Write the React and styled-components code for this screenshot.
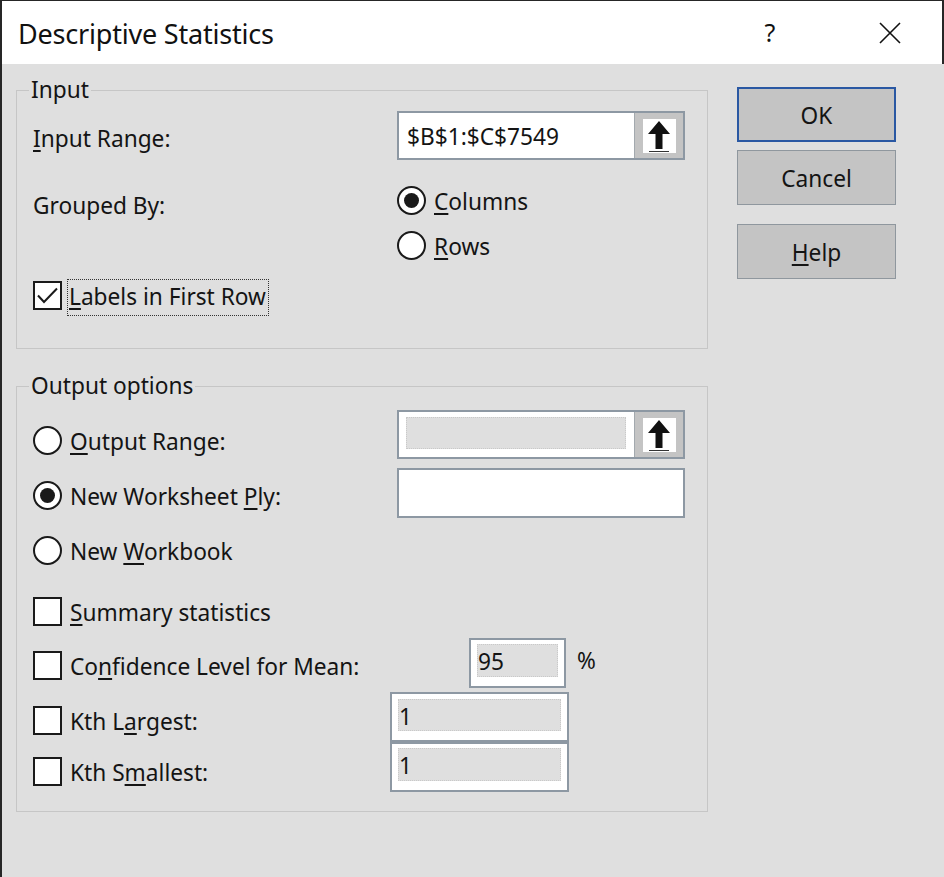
import React from 'react';
import styled, { createGlobalStyle } from 'styled-components';

const GlobalStyle = createGlobalStyle`
  html, body {
    margin: 0;
    padding: 0;
    background: #dfdfdf;
  }
  body {
    font-family: "Noto Sans", "Open Sans", sans-serif;
    color: #141414;
    line-height: 27px;
  }
`;

const TEXT = '22.7px';

const Window = styled.div`
  width: 944px;
  height: 877px;
  box-sizing: border-box;
  border-left: 2px solid #262626;
  border-top: 1px solid #262626;
  background: #dfdfdf;
  display: flex;
  flex-direction: column;
  overflow: hidden;
`;

const TitleBar = styled.div`
  height: 63px;
  flex-shrink: 0;
  background: #fff;
  border-right: 2px solid #262626;
  display: flex;
  align-items: center;
  padding-left: 16px;
`;

const Title = styled.div`
  flex: 1;
  font-size: 27px;
  letter-spacing: -0.2px;
  color: #111;
  margin-top: 2px;
`;

const CaptionButton = styled.div`
  width: ${p => p.$w}px;
  height: 63px;
  display: flex;
  align-items: center;
  justify-content: center;
  margin-right: ${p => p.$mr || 0}px;
  font-size: 25px;
  color: #111;
`;

const Body = styled.div`
  flex: 1;
  display: flex;
  padding: 14px 0 0 14px;
`;

const MainColumn = styled.div`
  width: 692px;
  display: flex;
  flex-direction: column;
`;

const Group = styled.fieldset`
  margin: ${p => p.$mt || 0}px 0 0 0;
  padding: 0 0 ${p => p.$pb}px 16px;
  border: 1px solid #c6c6c6;
  min-width: 0;
`;

const Legend = styled.legend`
  margin-left: -4px;
  padding: 0 2px;
  font-size: ${TEXT};
  line-height: 24px;
  height: 24px;
`;

const Row = styled.div`
  display: grid;
  grid-template-columns: ${p => p.$label || 364}px auto;
  grid-template-rows: ${p => p.$h}px;
  align-items: center;
  justify-items: start;
  height: ${p => p.$h}px;
  margin-top: ${p => p.$mt || 0}px;
  & > :first-child {
    margin-top: ${p => p.$drop || 0}px;
  }
`;

const Label = styled.span`
  font-size: ${TEXT};
  white-space: nowrap;
`;

const Key = styled.span`
  text-decoration: underline;
  text-underline-offset: 3px;
  text-decoration-thickness: 1.5px;
`;

const Choice = styled.label`
  display: flex;
  align-items: center;
  gap: 8px;
  font-size: ${TEXT};
  white-space: nowrap;
`;

const ChoiceText = styled.span`
  margin-top: 2px;
`;

const RadioCircle = styled.span`
  width: 29px;
  height: 29px;
  box-sizing: border-box;
  border: 2px solid #1a1a1a;
  border-radius: 50%;
  background: #fff;
  display: flex;
  align-items: center;
  justify-content: center;
  flex-shrink: 0;
  &::after {
    content: "";
    width: 15px;
    height: 15px;
    border-radius: 50%;
    background: #1a1a1a;
    display: ${p => (p.$checked ? 'block' : 'none')};
  }
`;

const CheckSquare = styled.span`
  width: 29px;
  height: 29px;
  box-sizing: border-box;
  border: 2px solid #1a1a1a;
  background: #fff;
  flex-shrink: 0;
  display: flex;
  svg { display: block; }
`;

const Focus = styled.span`
  border: 1px dotted #333;
  padding: 1px 2px 3px 1px;
  margin-left: -3px;
`;

const Box = styled.div`
  width: ${p => p.$w}px;
  height: ${p => p.$h || 49}px;
  box-sizing: border-box;
  border: 2px solid #8d98a3;
  background: #fff;
  display: flex;
  align-items: stretch;
`;

const BoxText = styled.div`
  flex: 1;
  display: flex;
  align-items: center;
  padding: 1px 0 0 8px;
  font-size: ${TEXT};
`;

const InnerField = styled.div`
  flex: 1;
  margin: ${p => p.$m || '4px 8px 8px 6px'};
  background: #dfdfdf;
  border: 1px dotted #c9c9c9;
  display: flex;
  align-items: center;
  font-size: ${TEXT};
  padding-top: 2px;
`;

const RefButton = styled.div`
  width: 48px;
  background: #c4c4c4;
  border-left: 1px solid #a3a9ae;
  display: flex;
  align-items: center;
  justify-content: center;
  span {
    width: 33px;
    height: 34px;
    background: #fff;
    display: flex;
    align-items: center;
    justify-content: center;
  }
`;

const Percent = styled.span`
  font-size: ${TEXT};
  margin-left: 11px;
  margin-top: -6px;
`;

const ConfidenceCell = styled.div`
  display: flex;
  align-items: center;
`;

const SideColumn = styled.div`
  display: flex;
  flex-direction: column;
  padding: 9px 0 0 29px;
`;

const Button = styled.div`
  width: 159px;
  height: 55px;
  box-sizing: border-box;
  background: #c4c4c4;
  border: ${p => (p.$primary ? '2px solid #2a58a3' : '1px solid #8f979e')};
  display: flex;
  align-items: center;
  justify-content: center;
  font-size: ${TEXT};
  padding-top: 2px;
  margin-top: ${p => p.$mt || 0}px;
`;

const ArrowIcon = () => (
  <svg width="26" height="32" viewBox="0 0 26 32">
    <polygon points="13,1 24,14 16.5,14 16.5,29 9.5,29 9.5,14 2,14" fill="#111" />
    <rect x="3" y="31" width="20" height="1.6" fill="#333" />
  </svg>
);

const Radio = ({ checked, children }) => (
  <Choice>
    <RadioCircle $checked={checked} />
    <ChoiceText>{children}</ChoiceText>
  </Choice>
);

const Check = ({ checked, children }) => (
  <Choice>
    <CheckSquare>
      {checked && (
        <svg width="25" height="25" viewBox="0 0 25 25">
          <polyline points="3,12.5 9,19 22,5.5" fill="none" stroke="#1a1a1a" strokeWidth="2" />
        </svg>
      )}
    </CheckSquare>
    <ChoiceText>{children}</ChoiceText>
  </Choice>
);

const RefField = ({ value, disabled }) => (
  <Box $w={288}>
    {disabled ? <InnerField $m="5px 8px 8px 7px" /> : <BoxText>{value}</BoxText>}
    <RefButton>
      <span><ArrowIcon /></span>
    </RefButton>
  </Box>
);

export default function App() {
  return (
    <>
      <GlobalStyle />
      <Window>
        <TitleBar>
          <Title>Descriptive Statistics</Title>
          <CaptionButton $w={60} $mr={45}>?</CaptionButton>
          <CaptionButton $w={90} $mr={7}>
            <svg width="22" height="22" viewBox="0 0 22 22">
              <path d="M1 1 L21 21 M21 1 L1 21" stroke="#111" strokeWidth="1.6" />
            </svg>
          </CaptionButton>
        </TitleBar>

        <Body>
          <MainColumn>
            <Group $pb={35}>
              <Legend>Input</Legend>
              <Row $h={49} $mt={9} $drop={6}>
                <Label><Key>I</Key>nput Range:</Label>
                <RefField value="$B$1:$C$7549" />
              </Row>
              <Row $h={29} $mt={26} $drop={10}>
                <Label>Grouped By:</Label>
                <Radio checked><Key>C</Key>olumns</Radio>
              </Row>
              <Row $h={29} $mt={16}>
                <span />
                <Radio><Key>R</Key>ows</Radio>
              </Row>
              <Row $h={36} $mt={17}>
                <Check checked>
                  <Focus><Key>L</Key>abels in First Row</Focus>
                </Check>
              </Row>
            </Group>

            <Group $mt={25} $pb={19}>
              <Legend>Output options</Legend>
              <Row $h={49} $mt={12} $drop={12}>
                <Radio><Key>O</Key>utput Range:</Radio>
                <RefField disabled />
              </Row>
              <Row $h={50} $mt={9} $drop={5}>
                <Radio checked>New Worksheet <Key>P</Key>ly:</Radio>
                <Box $w={288} $h={50} />
              </Row>
              <Row $h={29} $mt={18}>
                <Radio>New <Key>W</Key>orkbook</Radio>
              </Row>
              <Row $h={29} $mt={32}>
                <Check><Key>S</Key>ummary statistics</Check>
              </Row>
              <Row $h={50} $mt={12} $label={436} $drop={4}>
                <Check>Co<Key>n</Key>fidence Level for Mean:</Check>
                <ConfidenceCell>
                  <Box $w={97} $h={50}>
                    <InnerField $m="4px 6px 9px 6px">95</InnerField>
                  </Box>
                  <Percent>%</Percent>
                </ConfidenceCell>
              </Row>
              <Row $h={50} $mt={4} $label={357} $drop={6}>
                <Check>Kth L<Key>a</Key>rgest:</Check>
                <Box $w={179} $h={50}>
                  <InnerField $m="5px 6px 9px 6px">1</InnerField>
                </Box>
              </Row>
              <Row $h={50} $mt={0} $label={357} $drop={8}>
                <Check>Kth S<Key>m</Key>allest:</Check>
                <Box $w={179} $h={50}>
                  <InnerField $m="4px 6px 9px 6px">1</InnerField>
                </Box>
              </Row>
            </Group>
          </MainColumn>

          <SideColumn>
            <Button $primary>OK</Button>
            <Button $mt={8}>Cancel</Button>
            <Button $mt={19}><span><Key>H</Key>elp</span></Button>
          </SideColumn>
        </Body>
      </Window>
    </>
  );
}
